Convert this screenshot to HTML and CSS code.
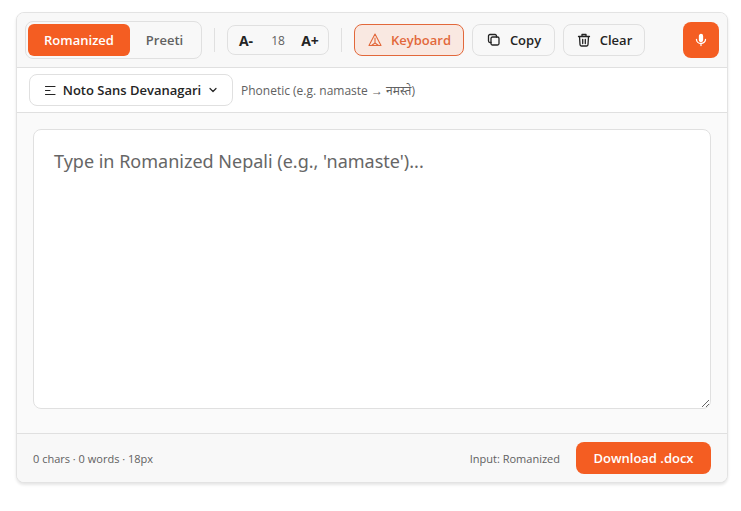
FILE: index.html
```html
<!DOCTYPE html>
<html lang="en">
	<head>
		<meta charset="utf-8">
		<meta name="viewport" content="width=device-width, initial-scale=1">
		<title>Nepali Typing</title>
		<link rel="stylesheet" href="styles.css">
	</head>
	<body>
		<main class="editor">
			<div class="toolbar">
				<div class="modes">
					<button class="mode active" type="button">Romanized</button>
					<button class="mode preeti" type="button">Preeti</button>
				</div>
				<span class="divider"></span>
				<div class="sizes">
					<button class="size" type="button" aria-label="Smaller text">A-</button>
					<span class="size-value">18</span>
					<button class="size" type="button" aria-label="Larger text">A+</button>
				</div>
				<span class="divider"></span>
				<button class="tool keyboard" type="button">
					<svg class="icon" viewBox="0 0 16 16"><path d="M8 2 14 13.500H2ZM8 6V11M8 11 4.500 13.500M8 11 11.500 13.500"/></svg>
					Keyboard
				</button>
				<button class="tool copy" type="button">
					<svg class="icon" viewBox="0 0 16 16"><rect x="5" y="5" width="8" height="8" rx="1.500"/><path d="M10.500 5V4A1.500 1.500 0 0 0 9 2.500H4A1.500 1.500 0 0 0 2.500 4v5A1.500 1.500 0 0 0 4 10.500h1"/></svg>
					Copy
				</button>
				<button class="tool clear" type="button">
					<svg class="icon" viewBox="0 0 16 16"><path d="M2.500 4.500H13.500M3.500 4.500 4 12.500A1.500 1.500 0 0 0 5.500 14h5A1.500 1.500 0 0 0 12 12.500L12.500 4.500M6 4V2.500h4V4M6.700 7.500v4M9.300 7.500v4"/></svg>
					Clear
				</button>
				<button class="mic" type="button" aria-label="Voice typing">
					<svg class="icon" viewBox="0 0 16 16"><rect class="solid" x="6.500" y="2.500" width="3" height="7" rx="1.500"/><path d="M3.500 7.500a4.500 4 0 0 0 9 0M8 12v1.500"/></svg>
				</button>
			</div>
			<div class="options">
				<button class="font" type="button">
					<svg class="lines" viewBox="0 0 12 12"><path d="M1.500 2.500H11M1.500 6.500H6M1.500 10.500H11"/></svg>
					Noto Sans Devanagari
					<svg class="chevron" viewBox="0 0 10 10"><path d="M2 3.500 5 6.500 8 3.500"/></svg>
				</button>
				<span class="hint">Phonetic (e.g. namaste → नमस्ते)</span>
			</div>
			<div class="page">
				<textarea class="text" aria-label="Nepali text" placeholder="Type in Romanized Nepali (e.g., 'namaste')..."></textarea>
			</div>
			<div class="status">
				<span>0 chars · 0 words · 18px</span>
				<span class="input-mode">Input: Romanized</span>
				<button class="download" type="button">Download .docx</button>
			</div>
		</main>
	</body>
</html>
```
FILE: styles.css
```css
* {
	box-sizing: border-box;
}
body {
	margin: 0;
	padding: 12px 13px 28px 16px;
	background-color: #fff;
	color: #242424;
	font-family: "Segoe UI", "Open Sans", "Noto Sans", sans-serif;
	font-size: 12px;
}
button {
	display: flex;
	align-items: center;
	justify-content: center;
	flex-shrink: 0;
	padding: 0;
	border: 0;
	background: none;
	color: inherit;
	font-family: inherit;
	font-size: 13px;
	font-weight: 600;
	white-space: nowrap;
	cursor: pointer;
}
svg {
	fill: none;
	stroke: currentColor;
	stroke-linecap: round;
	stroke-linejoin: round;
}
.editor {
	border: 1px solid #e3e3e3;
	border-radius: 8px;
	background-color: #fafafa;
	box-shadow: 0 2px 3px rgba(0, 0, 0, .1);
	overflow: hidden;
}
.toolbar {
	display: flex;
	align-items: center;
	gap: 8px;
	height: 55px;
	padding: 0 8px;
	border-bottom: 1px solid #e0e0e0;
	background-color: #f8f8f8;
}
.modes {
	display: flex;
	padding: 2px;
	border: 1px solid #e0e0e0;
	border-radius: 8px;
}
.mode {
	width: 102px;
	height: 32px;
	border-radius: 6px;
	color: #616161;
}
.preeti {
	width: 69px;
}
.active {
	background-color: #f45d22;
	color: #fff;
}
.divider {
	width: 1px;
	height: 24px;
	margin: 0 4px;
	background-color: #e0e0e0;
}
.sizes {
	display: flex;
	align-items: center;
	width: 102px;
	height: 30px;
	border: 1px solid #e0e0e0;
	border-radius: 8px;
}
.size {
	width: 36px;
	height: 28px;
	font-size: 14px;
	font-weight: 700;
}
.size-value {
	flex: 1;
	color: #616161;
	text-align: center;
}
.tool {
	gap: 8px;
	height: 32px;
	border: 1px solid #e0e0e0;
	border-radius: 8px;
}
.icon {
	width: 16px;
	height: 16px;
	stroke-width: 1.3;
}
.keyboard {
	width: 110px;
	border-color: #e2683b;
	background-color: #f9e8e1;
	color: #e2683b;
}
.keyboard .icon {
	stroke-width: 1.1;
}
.copy {
	width: 83px;
}
.clear {
	width: 82px;
}
.mic {
	width: 36px;
	height: 36px;
	margin-left: auto;
	border-radius: 8px;
	background-color: #f45d22;
	color: #fff;
}
.solid {
	fill: currentColor;
}
.options {
	display: flex;
	align-items: center;
	gap: 8px;
	height: 45px;
	padding: 0 12px;
	border-bottom: 1px solid #e0e0e0;
	background-color: #fff;
}
.font {
	gap: 7px;
	width: 204px;
	height: 32px;
	border: 1px solid #e0e0e0;
	border-radius: 8px;
}
.lines {
	width: 12px;
	height: 12px;
	stroke-width: 1.2;
}
.chevron {
	width: 10px;
	height: 10px;
	stroke-width: 1.2;
}
.hint {
	color: #616161;
}
.page {
	padding: 16px 16px 24px;
}
.text {
	display: block;
	width: 100%;
	height: 280px;
	padding: 16px 20px;
	border: 1px solid #e0e0e0;
	border-radius: 8px;
	background-color: #fff;
	font-family: "Noto Sans", sans-serif;
	font-size: 18px;
	line-height: 30px;
	resize: vertical;
}
.text::placeholder {
	color: #666;
}
.status {
	display: flex;
	align-items: center;
	gap: 16px;
	height: 49px;
	padding: 0 16px;
	border-top: 1px solid #e0e0e0;
	background-color: #f8f8f8;
	color: #616161;
	font-size: 11px;
}
.input-mode {
	margin-left: auto;
}
.download {
	width: 135px;
	height: 32px;
	border-radius: 8px;
	background-color: #f45d22;
	color: #fff;
}
```
